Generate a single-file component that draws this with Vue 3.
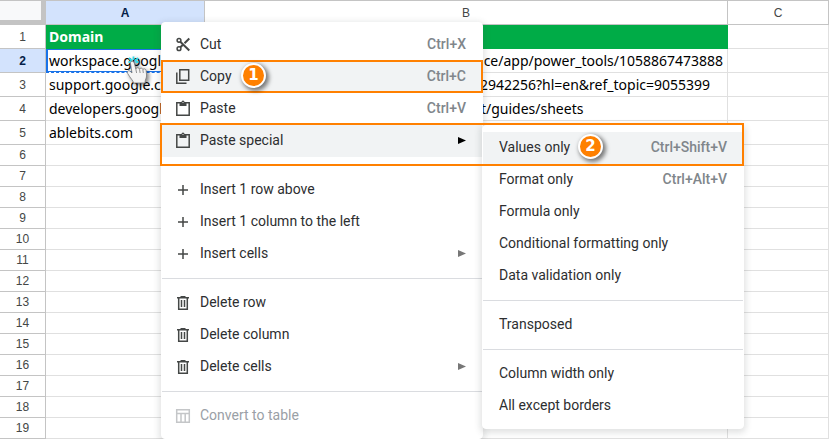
<script setup>
const rows = [
  { n: 1, a: 'Domain', b: '', kind: 'title' },
  { n: 2, a: 'workspace.google.com', b: 'https://workspace.google.com/marketplace/app/power_tools/1058867473888', kind: 'active' },
  { n: 3, a: 'support.google.com', b: 'http://support.google.com/docs/answer/2942256?hl=en&ref_topic=9055399' },
  { n: 4, a: 'developers.google.com', b: 'http://developers.google.com/apps_script/guides/sheets' },
  { n: 5, a: 'ablebits.com', b: '' },
  ...Array.from({ length: 14 }, (_, i) => ({ n: i + 6, a: '', b: '', kind: 'short' })),
]

const menu = [
  [
    { icon: 'cut', label: 'Cut', keys: 'Ctrl+X' },
    { icon: 'copy', label: 'Copy', keys: 'Ctrl+C', on: true },
    { icon: 'paste', label: 'Paste', keys: 'Ctrl+V' },
    { icon: 'paste', label: 'Paste special', sub: true, on: true },
  ],
  [
    { icon: 'plus', label: 'Insert 1 row above' },
    { icon: 'plus', label: 'Insert 1 column to the left' },
    { icon: 'plus', label: 'Insert cells', sub: true },
  ],
  [
    { icon: 'trash', label: 'Delete row' },
    { icon: 'trash', label: 'Delete column' },
    { icon: 'trash', label: 'Delete cells', sub: true },
  ],
  [{ icon: 'table', label: 'Convert to table', disabled: true }],
]

const submenu = [
  [
    { label: 'Values only', keys: 'Ctrl+Shift+V', on: true },
    { label: 'Format only', keys: 'Ctrl+Alt+V' },
    { label: 'Formula only' },
    { label: 'Conditional formatting only' },
    { label: 'Data validation only' },
  ],
  [{ label: 'Transposed' }],
  [{ label: 'Column width only' }, { label: 'All except borders' }],
]
</script>

<template>
  <main class="app">
    <table class="sheet">
      <colgroup>
        <col class="c-num" /><col class="c-a" /><col /><col class="c-c" />
      </colgroup>
      <thead>
        <tr>
          <td class="corner"></td>
          <th class="picked" scope="col">A</th>
          <th scope="col">B</th>
          <th scope="col">C</th>
        </tr>
      </thead>
      <tbody>
        <tr v-for="r in rows" :key="r.n" :class="r.kind">
          <th scope="row">{{ r.n }}</th>
          <td class="cell-a"><div class="clip">{{ r.a }}</div></td>
          <td class="cell-b"><div class="clip">{{ r.b }}</div></td>
          <td></td>
        </tr>
      </tbody>
    </table>

    <svg class="hand" width="26" height="32" viewBox="0 0 26 32" aria-hidden="true">
      <path d="M5 4l3 3M9.500 2.500V6M14 4l-3 3M4.500 8h3M11.500 8h3" stroke="#2fd9ea" stroke-width="1.800" fill="none" />
      <path d="M6.500 9.500C6 7 9.700 6.500 10.300 9l1.500 6c.5-1.700 3.300-1.800 3.700.1.600-1.500 3-1.300 3.400.5.700-1.200 2.900-.9 3.200.9l.5 4.500c.2 3-1.600 4.500-1.600 8H9.500c-.2-2.500-3-4.500-5.800-9.500-1.200-2.300.9-3.800 2.700-2L8 19z" fill="#f4f4f4" stroke="#777" stroke-width=".8" />
      <path d="M11.800 15l.8 4M15.500 15.200l.6 3.800M18.900 15.800l.4 3.200" stroke="#888" stroke-width=".9" fill="none" />
    </svg>

    <div class="menu main" role="menu">
      <div v-for="(group, g) in menu" :key="g" class="group">
        <button v-for="item in group" :key="item.label" class="item" :class="{ on: item.on }" :disabled="item.disabled" role="menuitem" type="button">
          <svg class="icon" width="16" height="16" viewBox="0 0 16 16" fill="none" stroke="currentColor" stroke-width="1.500" aria-hidden="true">
            <g v-if="item.icon === 'cut'">
              <circle cx="4" cy="4.300" r="1.900" /><circle cx="4" cy="12.700" r="1.900" />
              <path d="M5.300 5.700l9 8.800M5.300 11.300L8 8.700M9.500 7.200l4.800-4.700" stroke-width="2" />
            </g>
            <g v-else-if="item.icon === 'copy'">
              <path d="M4.800 1.800h8.900v10.500H4.800zM1.800 4.500v10.800h9.700" />
            </g>
            <g v-else-if="item.icon === 'paste'">
              <path d="M1.800 2.800h12.400v12.400H1.800z" />
              <path d="M4.500 2h2a1.500 1.600 0 0 1 3 0h2v4h-7z" fill="currentColor" stroke="none" />
              <circle cx="8" cy="2.500" r=".6" fill="#fff" stroke="none" />
            </g>
            <path v-else-if="item.icon === 'plus'" d="M8 4v10M3 9h10" />
            <g v-else-if="item.icon === 'trash'">
              <path d="M2 3.700h12M5.500 2.700h5M3.700 4v11.200h8.600V4M6.500 6v7M9.500 6v7" />
            </g>
            <g v-else>
              <path d="M1.700 2.700h12.600v12.600H1.700zM1.700 6.500h12.600M6 6.500v9M10.200 6.500v9" />
            </g>
          </svg>
          <span class="label">{{ item.label }}</span>
          <kbd v-if="item.keys">{{ item.keys }}</kbd>
          <svg v-if="item.sub" class="arrow" width="8" height="8" viewBox="0 0 8 8" aria-hidden="true"><path d="M0 1L8 4.500L0 8z" fill="currentColor" /></svg>
        </button>
      </div>
    </div>

    <div class="menu side" role="menu">
      <div v-for="(group, g) in submenu" :key="g" class="group">
        <button v-for="item in group" :key="item.label" class="item" :class="{ on: item.on }" role="menuitem" type="button">
          <span class="label">{{ item.label }}</span>
          <kbd v-if="item.keys">{{ item.keys }}</kbd>
        </button>
      </div>
    </div>

    <div class="frame frame-copy"></div>
    <div class="frame frame-paste"></div>
    <span class="badge badge-one">1</span>
    <span class="badge badge-two">2</span>
  </main>
</template>

<style>
body { margin: 0; background: #fff; }
</style>

<style scoped>
.app { position: relative; overflow: hidden; font-family: Roboto, sans-serif; }
.sheet { width: 100%; table-layout: fixed; border-collapse: separate; border-spacing: 0; }
.c-num { width: 46px; }
.c-a { width: 159px; }
.c-c { width: 101px; }
.sheet th, .sheet td { box-sizing: border-box; height: 24px; padding: 0; border: 0 solid #e0e0e0; border-width: 0 1px 1px 0; }
.sheet th { border-color: #c4c4c4; color: #444746; font: 12px/20px "Liberation Sans", sans-serif; }
.sheet thead th, .sheet thead td { height: 25px; border-top: 1px solid #c4c4c4; }
.sheet .corner { background: #f8f9fa; border-color: #c4c4c4; border-right-width: 5px; border-bottom-width: 5px; }
.sheet .picked, .sheet .active th { background: #d3e3fd; color: #041e49; font-weight: bold; }
.sheet .short th, .sheet .short td { height: 21px; }
.sheet td { color: #000; font: 14px/22px "Noto Sans", sans-serif; }
.clip { overflow: hidden; white-space: nowrap; padding-left: 3px; }
.cell-b .clip { padding-left: 6px; }
.sheet .title td:nth-child(2), .sheet .title td:nth-child(3) { background: #00ac47; border-color: #00ac47; color: #fff; font-weight: bold; }
.sheet .active .cell-a { border-bottom: 1px dashed #1a73e8; box-shadow: inset 2px 1px #1a73e8, inset 0 -1px #1a73e8; }

.hand { position: absolute; left: 124px; top: 54px; filter: drop-shadow(2px 2px 2px rgba(0, 0, 0, .5)); }

.menu { position: absolute; box-sizing: border-box; padding: 6px 0; border: 1px solid #fff; border-radius: 4px; background: #fff; box-shadow: 0 2px 6px 2px rgba(60, 64, 67, .15); }
.main { left: 161px; top: 22px; width: 322px; }
.side { left: 482px; top: 125px; width: 262px; }
.group + .group { margin-top: 8px; padding-top: 8px; border-top: 1px solid #dadce0; }
.item { display: flex; align-items: center; width: 100%; height: 32px; padding: 0 16px 2px; border: 0; background: transparent; color: #444746; font: 14px/20px Roboto, sans-serif; text-align: left; }
.main .item { padding-left: 13px; }
.item.on { background: #f1f3f4; }
.item:disabled { color: #c4c6c8; }
.icon { flex: none; margin-right: 9px; }
.label { flex: 1; color: #2d2e30; white-space: nowrap; }
.item:disabled .label { color: #9aa0a6; }
kbd { color: #80868b; font: 500 14px/20px Roboto, sans-serif; }
.arrow { color: #777; }
.item.on .arrow { color: #000; }

.frame { position: absolute; box-sizing: border-box; border: 2px solid #ff8000; pointer-events: none; }
.frame-copy { left: 161px; top: 60px; width: 322px; height: 33px; }
.frame-paste { left: 160px; top: 123px; width: 584px; height: 43px; }
.badge { position: absolute; display: grid; place-items: center; box-sizing: border-box; width: 25px; height: 25px; border: 2px solid #fff; border-radius: 50%; background: #ff8000; color: #fff; font: bold 15px/21px "DejaVu Sans", sans-serif; box-shadow: 2px 2px 4px 1px rgba(0, 0, 0, .5); }
.badge-one { left: 241px; top: 63px; }
.badge-two { left: 578px; top: 134px; }
</style>
